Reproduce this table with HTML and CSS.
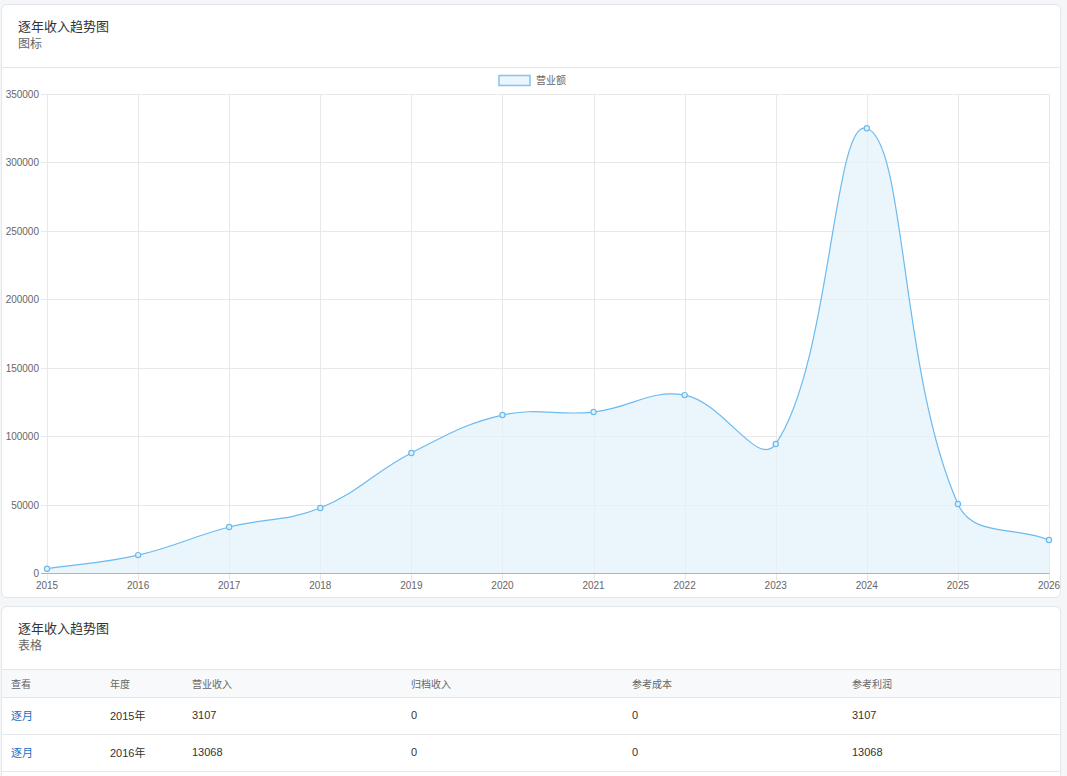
FILE: index.html
```html
<!DOCTYPE html>
<html lang="zh-CN">
<head>
<meta charset="utf-8">
<title>逐年收入趋势图</title>
<link rel="stylesheet" href="styles.css">
</head>
<body>
<div class="card">
  <div class="card-header">
    <div class="card-title">逐年收入趋势图</div>
    <div class="card-subtitle">图标</div>
  </div>
  <div class="chart-body">
    <svg id="chart" class="chart" width="1058" height="529" viewBox="0 0 1058 529">
      <rect class="legend-box" x="497" y="7.5" width="31" height="10"></rect>
      <text class="legend-text" x="534" y="16">营业额</text>
    </svg>
  </div>
</div>

<div class="card card-table">
  <div class="card-header">
    <div class="card-title">逐年收入趋势图</div>
    <div class="card-subtitle">表格</div>
  </div>
  <table class="data">
    <colgroup>
      <col class="c1"><col class="c2"><col class="c3"><col class="c4"><col class="c5"><col>
    </colgroup>
    <thead>
      <tr><th>查看</th><th>年度</th><th>营业收入</th><th>归档收入</th><th>参考成本</th><th>参考利润</th></tr>
    </thead>
    <tbody>
      <tr><td><a class="link" href="#">逐月</a></td><td>2015年</td><td>3107</td><td>0</td><td>0</td><td>3107</td></tr>
      <tr><td><a class="link" href="#">逐月</a></td><td>2016年</td><td>13068</td><td>0</td><td>0</td><td>13068</td></tr>
    </tbody>
  </table>
</div>
<script src="script.js"></script>
</body>
</html>
```

FILE: styles.css
```css
* { box-sizing: border-box; }
html, body { margin: 0; }
body {
  background: #f5f6f8;
  padding: 4px 6px 8px 1px;
  font-family: "Liberation Sans", "Noto Sans CJK SC", sans-serif;
  color: #333;
  overflow: hidden;
}
.card {
  background: #fff;
  border: 1px solid #e3e6ea;
  border-radius: 6px;
  overflow: hidden;
}
.card-table { margin-top: 8px; padding-bottom: 24px; }
.card-header {
  padding: 13px 16px 15px;
  border-bottom: 1px solid #e3e6ea;
}
.card-title {
  font-size: 13px;
  line-height: 18px;
  color: #333;
}
.card-subtitle {
  font-size: 12px;
  line-height: 16px;
  color: #666;
}
.chart-body { height: 529px; }
.chart { display: block; }
.legend-box { fill: #eaf5fd; stroke: #82c3f1; stroke-width: 1.5; }
.legend-text, .tick-label {
  font-family: "Liberation Sans", "Noto Sans CJK SC", sans-serif;
  font-size: 10px;
  fill: #666;
}
.grid { stroke: #e8e8e8; stroke-width: 1; }
.axis { stroke: #b3b3b3; stroke-width: 1; }
.area { fill: #eaf5fc; stroke: none; }
.line { fill: none; stroke: #6dbaef; stroke-width: 1.2; }
.pt { fill: #e3f1fc; stroke: #6dbaef; stroke-width: 1.2; }

.data {
  width: 100%;
  border-collapse: collapse;
  table-layout: fixed;
}
.data col.c1 { width: 99px; }
.data col.c2 { width: 82px; }
.data col.c3 { width: 219px; }
.data col.c4 { width: 221px; }
.data col.c5 { width: 220px; }
.data th {
  height: 27px;
  padding: 0 9px;
  background: #f8f9fa;
  border-bottom: 1px solid #e3e6ea;
  font-size: 10px;
  font-weight: normal;
  color: #666;
  text-align: left;
}
.data td {
  height: 37px;
  padding: 0 9px 1px;
  border-bottom: 1px solid #e6e8eb;
  font-size: 11px;
  color: #333;
}
.link { color: #1a6fc4; text-decoration: none; font-size: 11px; }
```

FILE: script.js
```js
(function () {
  var svg = document.getElementById('chart');
  var NS = 'http://www.w3.org/2000/svg';
  var left = 45, right = 1047, top = 26, bottom = 505;
  var max = 350000;
  var years = [2015,2016,2017,2018,2019,2020,2021,2022,2023,2024,2025,2026];
  var vals = [3107,13068,33600,47500,87700,115400,117600,130000,94300,325000,50400,24100];
  function el(name, attrs, text) {
    var e = document.createElementNS(NS, name);
    for (var k in attrs) e.setAttribute(k, attrs[k]);
    if (text !== undefined) e.textContent = text;
    svg.appendChild(e);
    return e;
  }
  var step = (right - left) / (years.length - 1);
  function X(i) { return left + i * step; }
  function Y(v) { return bottom - v * (bottom - top) / max; }

  for (var v = 0; v <= max; v += 50000) {
    var y = Math.round(Y(v)) + 0.5;
    el('line', { x1: 39, y1: y, x2: right + 0.5, y2: y, 'class': v === 0 ? 'axis' : 'grid' });
    el('text', { x: 37, y: y + 3.5, 'text-anchor': 'end', 'class': 'tick-label' }, String(v));
  }
  for (var i = 0; i < years.length; i++) {
    var x = Math.round(X(i)) + 0.5;
    el('line', { x1: x, y1: top + 0.5, x2: x, y2: bottom + 7, 'class': 'grid' });
    el('text', { x: X(i), y: 521, 'text-anchor': 'middle', 'class': 'tick-label' }, String(years[i]));
  }

  var pts = vals.map(function (v, i) { return { x: X(i), y: Y(v) }; });
  var t = 0.4;
  var cps = pts.map(function (p1, i) {
    var p0 = pts[i - 1] || p1, p2 = pts[i + 1] || p1;
    var d01 = Math.hypot(p1.x - p0.x, p1.y - p0.y);
    var d12 = Math.hypot(p2.x - p1.x, p2.y - p1.y);
    var s01 = d01 / (d01 + d12), s12 = d12 / (d01 + d12);
    if (isNaN(s01)) s01 = 0; if (isNaN(s12)) s12 = 0;
    var fa = t * s01, fb = t * s12;
    function cap(p) {
      return { x: Math.min(right, Math.max(left, p.x)), y: Math.min(bottom, Math.max(top, p.y)) };
    }
    return {
      prev: cap({ x: p1.x - fa * (p2.x - p0.x), y: p1.y - fa * (p2.y - p0.y) }),
      next: cap({ x: p1.x + fb * (p2.x - p0.x), y: p1.y + fb * (p2.y - p0.y) })
    };
  });
  var d = 'M' + pts[0].x + ',' + pts[0].y;
  for (var j = 1; j < pts.length; j++) {
    d += ' C' + cps[j - 1].next.x + ',' + cps[j - 1].next.y + ' ' +
      cps[j].prev.x + ',' + cps[j].prev.y + ' ' + pts[j].x + ',' + pts[j].y;
  }
  el('path', { d: d + ' L' + right + ',' + bottom + ' L' + left + ',' + bottom + ' Z', 'class': 'area' });
  for (var g = 0; g < years.length; g++) {
    var gx = Math.round(X(g)) + 0.5;
    el('line', { x1: gx, y1: top + 0.5, x2: gx, y2: bottom, 'class': 'grid', 'stroke-opacity': 0.5 });
  }
  for (var h = 50000; h <= max; h += 50000) {
    var gy = Math.round(Y(h)) + 0.5;
    el('line', { x1: left, y1: gy, x2: right, y2: gy, 'class': 'grid', 'stroke-opacity': 0.5 });
  }
  el('line', { x1: 39, y1: bottom + 0.5, x2: right + 0.5, y2: bottom + 0.5, 'class': 'axis' });
  el('path', { d: d, 'class': 'line' });
  pts.forEach(function (p) { el('circle', { cx: p.x, cy: p.y, r: 2.6, 'class': 'pt' }); });
})();
```
